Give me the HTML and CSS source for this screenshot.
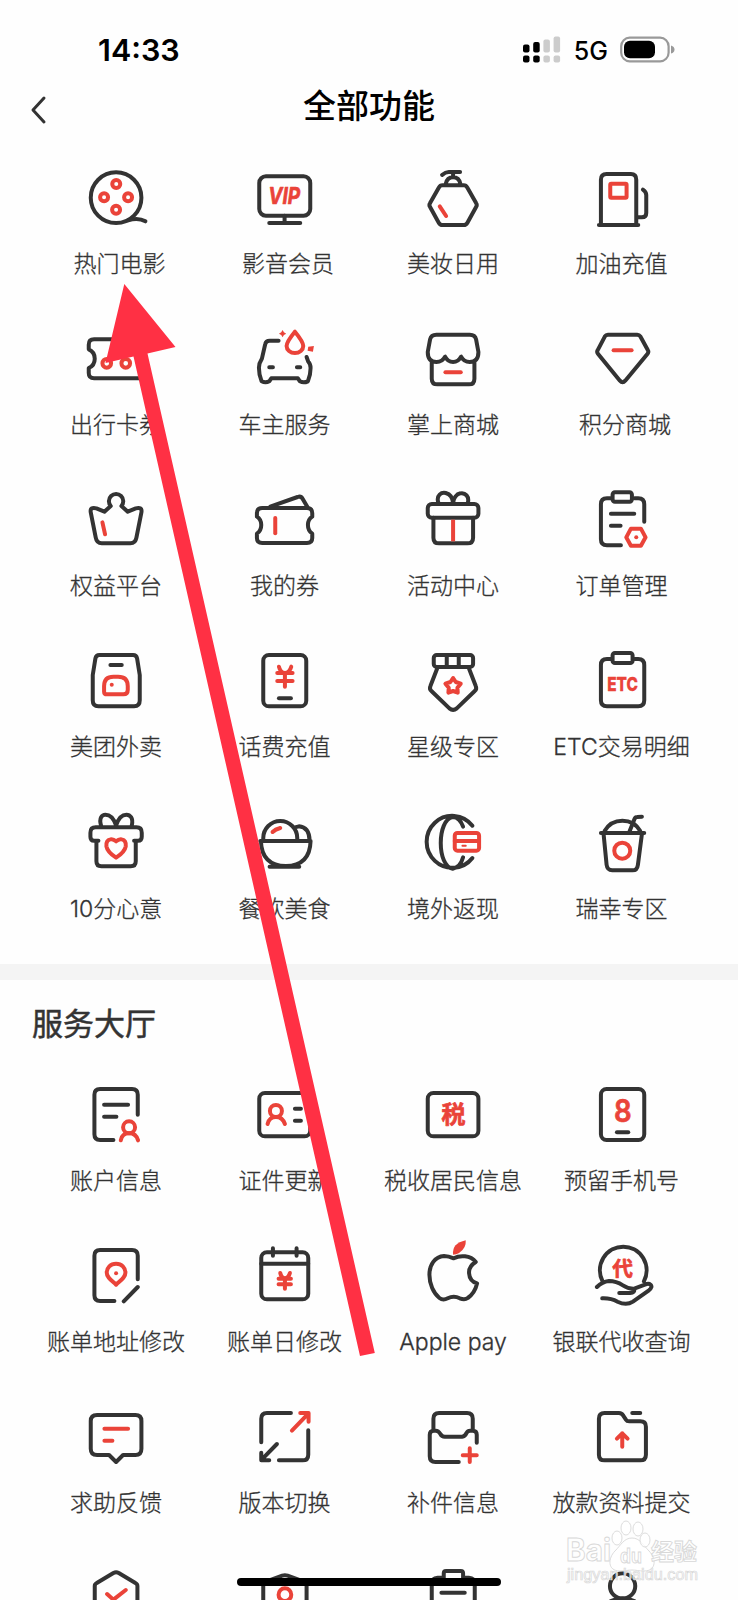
FILE: index.html
```html
<!DOCTYPE html>
<html lang="zh-CN">
<head>
<meta charset="utf-8">
<title>全部功能</title>
<link rel="stylesheet" href="styles.css">
</head>
<body>
<div class="phone">
  <div class="status">
    <div class="time">14:33</div>
    <div class="status-right">
      <svg class="signal" width="38" height="27" viewBox="0 0 38 27">
        <rect x="0" y="8.5" width="6.5" height="8" rx="2"/><rect x="10.2" y="6" width="6.5" height="10.5" rx="2"/>
        <g class="faint"><rect x="20.4" y="3.5" width="6.5" height="13" rx="2"/><rect x="30.6" y="0.5" width="6.5" height="16" rx="2"/></g>
        <rect x="0" y="19.5" width="6.5" height="7" rx="2"/><rect x="10.2" y="19.5" width="6.5" height="7" rx="2"/>
        <g class="faint"><rect x="20.4" y="19.5" width="6.5" height="7" rx="2"/><rect x="30.6" y="19.5" width="6.5" height="7" rx="2"/></g>
      </svg>
      <span class="net">5G</span>
      <svg class="battery" width="56" height="27" viewBox="0 0 56 27">
        <rect class="shell" x="1.2" y="1.7" width="47.4" height="23.6" rx="8.5"/>
        <rect x="4" y="4.8" width="31" height="17.4" rx="6"/>
        <path class="nub" d="M51 9.5q3.5 1 3.5 4t-3.5 4z"/>
      </svg>
    </div>
  </div>

  <div class="nav">
    <svg class="back" width="20" height="32" viewBox="0 0 20 32"><path d="M16 4L5 16l11 12"/></svg>
    <h1>全部功能</h1>
  </div>

  <div class="grid">
    <div class="tile shifted">
      <svg viewBox="60.75 33 216 216"><circle cx="169" cy="140" r="76"/><path d="M205 208Q235 198 257 211"/><g class="red"><circle cx="169.500" cy="99" r="12"/><circle cx="133" cy="139" r="12"/><circle cx="205" cy="139" r="12"/><circle cx="169" cy="176" r="12"/></g></svg>
      <span>热门电影</span>
    </div>
    <div class="tile shifted">
      <svg viewBox="566.25 33 216 216"><rect x="597" y="76" width="153" height="118" rx="20"/><path d="M673 194v22M627 216h93"/><text class="vip" x="624" y="160" textLength="96" lengthAdjust="spacingAndGlyphs">VIP</text></svg>
      <span>影音会员</span>
    </div>
    <div class="tile">
      <svg viewBox="81.75 33 216 216"><path d="M158 103h64q7 0 11 7l26 46q4 6 0 12l-26 47q-4 7-11 7h-64q-7 0-11-7l-26-47q-4-6 0-12l26-46q4-7 11-7zM168 99q4-20 22-20t22 20M190 78V64M157 72q10-9 20-9h34"/><path class="red" d="M150 166l19 29"/></svg>
      <span>美妆日用</span>
    </div>
    <div class="tile">
      <svg viewBox="587.25 33 216 216"><path d="M632 221V86q0-17 17-17h73q16 0 16 17v135M626 222h118M742 199h13q13 0 13-13v-54q0-9-10-16"/><rect class="red" x="660" y="98" width="49" height="42" rx="3"/></svg>
      <span>加油充值</span>
    </div>

    <div class="tile">
      <svg viewBox="60.75 517 216 216"><path d="M240 566H103q-16 0-16 16v14q18 8 18 28t-18 28v15q0 16 16 16h142"/><g class="red"><circle cx="141" cy="638" r="13"/><circle cx="198" cy="638" r="13"/></g></svg>
      <span>出行卡券</span>
    </div>
    <div class="tile">
      <svg viewBox="566.25 517 216 216"><path d="M655 570h-27q-11 0-13 10l-10 44q-9 14-9 27 0 22 8 41 12 6 23 0l6-9h80l6 9q11 6 24 0 8-19 8-40 0-12-7-19l-5-14M627 650h11M710 650h10"/><path class="red" d="M704 543c-14 17-25 31-25 43a25 21 0 0 0 50 0c0-12-11-26-25-43z"/><path class="fill" d="M667 538l4 7 7 4-7 4-4 7-4-7-7-4 7-4zM744 588l17-2-3 17-16-3z"/></svg>
      <span>车主服务</span>
    </div>
    <div class="tile">
      <svg viewBox="81.75 517 216 216"><path d="M140 552h100q16 0 19 14l7 38q0 30-26 30-18 0-26-16-8 16-24 16-16 0-24-16-8 16-26 16-26 0-26-30l7-38q3-14 19-14zM126 634v50q0 17 17 17h95q16 0 16-17v-50"/><path class="red" d="M167 665h46"/></svg>
      <span>掌上商城</span>
    </div>
    <div class="tile shifted">
      <svg viewBox="587.25 517 216 216"><path d="M653 552h88q6 0 9 5l23 42q3 5-1 10l-67 81q-8 9-16 0l-66-81q-4-5-1-10l22-42q3-5 9-5z"/><path class="red" d="M670 599h54"/></svg>
      <span>积分商城</span>
    </div>

    <div class="tile">
      <svg viewBox="60.75 41 216 216"><path d="M153 107l-19 17-24-10q-20-5-17 12l15 76q3 17 18 17h86q15 0 18-17l15-76q3-17-17-12l-24 10-19-17M153 107a21.500 21.500 0 1 1 32 0"/><path class="red" d="M128 156l8 36"/></svg>
      <span>权益平台</span>
    </div>
    <div class="tile">
      <svg viewBox="566.25 41 216 216"><path d="M606 113h134q16 0 16 16v10q-13 8-13 25t13 26v13q0 15-16 15H606q-16 0-16-15v-13q13-9 13-26t-13-25v-10q0-16 16-16zM630 109l82-29q10-4 15 5l15 26"/><path class="red" d="M645 143v46"/></svg>
      <span>我的券</span>
    </div>
    <div class="tile">
      <svg viewBox="81.75 41 216 216"><rect x="114" y="101" width="152" height="41" rx="12"/><path d="M131 142v60q0 17 17 17h85q17 0 17-17v-60M146 98c-8-24 10-33 22-30 14 4 21 16 22 30 1-14 10-27 22-29 14-3 28 10 22 29"/><path class="red flat" d="M190 148v65"/></svg>
      <span>活动中心</span>
    </div>
    <div class="tile">
      <svg viewBox="587.25 41 216 216"><rect x="667" y="66" width="58" height="28" rx="7"/><path d="M661 84h-11q-18 0-18 18v105q0 18 18 18h42M733 84h11q18 0 18 18v52M662 130h70M662 166h29"/><path class="red" d="M722 175h30l14 26-14 25h-30l-14-25z"/><circle class="fill" cx="738" cy="201" r="6"/></svg>
      <span>订单管理</span>
    </div>

    <div class="tile">
      <svg viewBox="60.75 525 216 216"><path d="M119 555h101q10 0 12 10l8 50v76q0 18-17 18H116q-17 0-17-18v-76l8-50q2-10 12-10zM152 585h34"/><path class="red" d="M133 665v-17q0-28 28-28h14q29 0 29 28v12q0 13-13 13h-49q-9 0-9-8z"/><circle class="fill" cx="156" cy="644" r="6"/></svg>
      <span>美团外卖</span>
    </div>
    <div class="tile">
      <svg viewBox="566.25 525 216 216"><rect x="609" y="555" width="129" height="154" rx="17"/><path d="M656 685h36"/><path class="red" d="M656 590q4 18 18 19 14-1 19-19M651 609h46M651 633h46M674 609v41"/></svg>
      <span>话费充值</span>
    </div>
    <div class="tile">
      <svg viewBox="81.75 525 216 216"><rect x="132" y="555" width="118" height="36" rx="9"/><path d="M171 556v34M207 556v34M142 596l-20 52q-4 9 3 15l54 52q11 9 22 0l54-52q7-6 3-15l-20-52"/><path class="red" d="M190 624l8 12 15 5-10 12 1 15-14-5-14 5 1-15-10-12 15-5z"/></svg>
      <span>星级专区</span>
    </div>
    <div class="tile">
      <svg viewBox="587.25 525 216 216"><rect x="667" y="549" width="60" height="30" rx="7"/><path d="M661 567h-11q-18 0-18 18v106q0 18 18 18h94q18 0 18-18V585q0-18-18-18h-11"/><text class="etc" x="651" y="662" textLength="92" lengthAdjust="spacingAndGlyphs">ETC</text></svg>
      <span>ETC交易明细</span>
    </div>

    <div class="tile">
      <svg viewBox="240.75 49 216 216"><path d="M296 150h-13q-11 0-11-12v-12q0-16 16-16h122q16 0 16 16v12q0 12-11 12h-12M290 152v60q0 15 15 15h88q15 0 15-15v-60M304 105c-7-24 3-33 13-33 16 0 26 14 32 32 6-18 16-32 31-32 10 0 22 9 16 33"/><path class="red" d="M349 152q-9-8-17-6-14 3-12 21 3 17 29 34 26-17 29-34 2-18-12-21-8-2-17 6z"/></svg>
      <span>10分心意</span>
    </div>
    <div class="tile">
      <svg viewBox="746.25 49 216 216"><path d="M780 151h151M782 151q2 74 75 75 72-1 74-75M808 228h89M789 147v-5a51 51 0 0 1 102 0v5M884 110l12-3q31 3 32 42"/><path class="red" d="M817 124q8-8 23-12"/></svg>
      <span>餐饮美食</span>
    </div>
    <div class="tile">
      <svg viewBox="144.75 49 216 216"><path d="M311 105A77 78 0 1 0 311 202M283 108q-10-28-31-29c-48 8-48 148 0 155q23-4 31-34"/><g class="red"><rect x="258" y="127" width="73" height="53" rx="8"/><path d="M258 151h73"/></g><path class="red thin" d="M281 165h10"/></svg>
      <span>境外返现</span>
    </div>
    <div class="tile">
      <svg viewBox="650.25 49 216 216"><path d="M695 127h130M703 130l9 92q2 17 17 17h61q14 0 16-17l12-92M706 121a62 62 0 0 1 107 0M781 122l15-38q2-5 8-5l14-1"/><circle class="red" cx="759" cy="180" r="24"/></svg>
      <span>瑞幸专区</span>
    </div>
  </div>

  <div class="divider"></div>
  <h2>服务大厅</h2>

  <div class="grid">
    <div class="tile">
      <svg viewBox="150.75 25 216 216"><path d="M324 132V72q0-17-17-17h-96q-17 0-17 17v119q0 17 17 17h40M223 102h72M223 138h37"/><g class="red"><circle cx="298" cy="170" r="18"/><path d="M273 209q4-21 25-21t27 21"/></g></svg>
      <span>账户信息</span>
    </div>
    <div class="tile">
      <svg viewBox="656.25 25 216 216"><rect x="687" y="67" width="153" height="130" rx="17"/><path d="M794 114h18M794 150h18"/><g class="red"><circle cx="737" cy="121" r="18"/><path d="M712 160q5-21 25-21t27 21"/></g></svg>
      <span>证件更新</span>
    </div>
    <div class="tile">
      <svg viewBox="141.75 25 216 216"><rect x="174" y="67" width="152" height="130" rx="17"/><text class="han" x="251" y="158" font-size="72" text-anchor="middle">税</text></svg>
      <span>税收居民信息</span>
    </div>
    <div class="tile">
      <svg viewBox="647.25 25 216 216"><rect x="692" y="55" width="130" height="153" rx="17"/><path d="M740 185h34"/><text class="eight" x="731" y="154" textLength="53" lengthAdjust="spacingAndGlyphs">8</text></svg>
      <span>预留手机号</span>
    </div>

    <div class="tile">
      <svg viewBox="150.75 509 216 216"><path d="M324 627v-71q0-17-17-17h-96q-17 0-17 17v119q0 17 17 17h43M282 693l42-43"/><path class="red" d="M259 580c17 0 28 12 28 27 0 14-14 23-28 36-14-13-28-22-28-36 0-15 11-27 28-27z"/><circle class="fill" cx="259" cy="609" r="6"/></svg>
      <span>账单地址修改</span>
    </div>
    <div class="tile">
      <svg viewBox="656.25 509 216 216"><rect x="693" y="546" width="141" height="141" rx="17"/><path d="M693 580h141M728 534v22M799 534v22"/><path class="red" d="M750 608q3 15 14 16 11-1 15-16M745 625h37M745 642h37M764 625v30"/></svg>
      <span>账单日修改</span>
    </div>
    <div class="tile">
      <svg viewBox="141.75 509 216 216"><path d="M252 564c18-10 50-10 66 11-15 9-21 20-20 34 1 15 10 26 24 30-4 18-14 34-28 44-8 6-16 4-24 1q-18-9-36 0c-8 4-17 5-25-1-18-14-30-42-30-70 0-30 16-54 44-56 10 0 20 3 29 7z"/><path class="fill" d="M250 553q-4-34 38-43 2 24-20 38-8 5-18 5z"/></svg>
      <span>Apple pay</span>
    </div>
    <div class="tile">
      <svg viewBox="647.25 509 216 216"><path d="M697 633a70 71 0 1 1 124 0M680 650q16-16 36-18 22 0 42 13 16 11 34 10M792 655q2 13-12 13h-33M696 684q26-1 46 10 26 13 46 0l48-34q12-10 5-17-6-5-17 0l-32 12"/><text class="han" x="757" y="616" font-size="62" text-anchor="middle">代</text></svg>
      <span>银联代收查询</span>
    </div>

    <div class="tile">
      <svg viewBox="150.75 33 216 216"><path d="M202 75h115q18 0 18 18v83q0 19-18 19h-37l-21 21-21-21h-36q-19 0-19-19V93q0-18 19-18z"/><path class="red" d="M224 116h71M224 152h24"/></svg>
      <span>求助反馈</span>
    </div>
    <div class="tile">
      <svg viewBox="656.25 33 216 216"><path d="M782 69h-72q-17 0-17 17v71M834 121v73q0 17-17 17h-71M740 162l-45 46M693 188v23h24"/><path class="red" d="M785 122l47-49M810 69h25v26"/></svg>
      <span>版本切换</span>
    </div>
    <div class="tile">
      <svg viewBox="141.75 33 216 216"><path d="M191 118V86q0-17 17-17h84q17 0 17 17v32M321 158v-24q0-12-12-12h-8q-7 0-10 6-5 11-14 12h-52q-9 0-13-8-6-10-14-10h-6q-12 0-12 12v65q0 17 17 17h70"/><path class="red" d="M300 175v41M279 196h42"/></svg>
      <span>补件信息</span>
    </div>
    <div class="tile">
      <svg viewBox="647.25 33 216 216"><path d="M703 69h43q9 0 13 8l8 12q3 5 10 5h33q17 0 17 16v84q0 17-17 17H703q-17 0-17-17V86q0-17 17-17zM786 69h24"/><path class="red" d="M756 130v40M740 146l16-16 16 16"/></svg>
      <span>放款资料提交</span>
    </div>

    <div class="tile">
      <svg viewBox="150.75 517 216 216"><path d="M195 670v-84q0-6 6-9l50-30q8-4 16 0l50 30q6 3 6 9v84"/><path class="red" d="M232 610l19 17 37-29"/></svg>
    </div>
    <div class="tile">
      <svg viewBox="656.25 517 216 216"><path d="M699 670v-84q0-10 10-14l47-17q8-3 16 0l47 17q10 4 10 14v84"/><circle class="red" cx="764" cy="612" r="19"/></svg>
    </div>
    <div class="tile">
      <svg viewBox="141.75 517 216 216"><path d="M229 541h44q7 0 7 7v20h-58v-20q0-7 7-7z"/><path d="M218 561h-14q-18 2-18 16v90M284 561h13q18 2 18 16v90M215 606h70"/></svg>
    </div>
    <div class="tile">
      <svg viewBox="647.25 517 216 216"><circle cx="757" cy="586" r="38"/><path d="M722 631q35-16 70 0"/></svg>
    </div>
  </div>

  <svg class="arrow" width="738" height="1600" viewBox="0 0 738 1600"><path d="M124.300 284L175.500 347l-28 6.500L374.800 1353l-14.800 3L133.500 356.500 105.500 363z"/></svg>

  <svg class="watermark" width="150" height="72" viewBox="0 0 150 72">
    <text class="bai" x="4" y="41" font-size="31" textLength="45" lengthAdjust="spacingAndGlyphs">Bai</text>
    <path d="M70 18c8 0 11 7 17 13 7 7 8 20-5 20-5 0-8-1-12-1s-7 1-12 1c-13 0-12-13-5-20 6-6 9-13 17-13z"/>
    <ellipse cx="55" cy="18" rx="5" ry="7"/><ellipse cx="64" cy="8" rx="5" ry="7"/><ellipse cx="76" cy="9" rx="5" ry="7"/><ellipse cx="83" cy="20" rx="5" ry="7"/>
    <text x="58" y="43" font-size="20" textLength="22" lengthAdjust="spacingAndGlyphs">du</text>
    <text class="cn" x="89" y="40" font-size="23">经验</text>
    <text class="url" x="5" y="60" font-size="16" textLength="131" lengthAdjust="spacingAndGlyphs">jingyan.baidu.com</text>
  </svg>
  <div class="home-bar"></div>
</div>
</body>
</html>
```
FILE: styles.css
```css
* { box-sizing: border-box; }
body {
  margin: 0;
  background: #fefefe;
  color: #333;
  font-family: "Noto Sans CJK SC", sans-serif;
}
.phone {
  position: relative;
  width: 738px;
  height: 1600px;
  overflow: hidden;
}
.status {
  display: flex;
  justify-content: space-between;
  align-items: center;
  height: 76px;
  padding: 23px 62px 0 98px;
  color: #000;
  font-family: Inter, sans-serif;
}
.time { font-size: 30.5px; font-weight: 600; }
.status-right { display: flex; align-items: center; }
.net { margin: 3px 12px 0 13px; font-size: 25px; font-weight: 500; }
.faint { fill: #ccc; }
.battery .shell { fill: none; stroke: #999; stroke-width: 2.2; }
.battery .nub { fill: #999; }

.nav {
  display: grid;
  grid-template-columns: 60px 1fr 60px;
  align-items: center;
  height: 58px;
}
.back { margin: 10px 0 0 28px; fill: none; stroke: #333; stroke-width: 3; stroke-linecap: round; stroke-linejoin: round; }
h1 {
  margin: 0;
  padding-bottom: 3px;
  color: #000;
  font-size: 33px;
  font-weight: 500;
  line-height: 48px;
  text-align: center;
}

.grid {
  display: grid;
  grid-template-columns: repeat(4, 1fr);
  row-gap: 42px;
  padding: 27.6px 32px 38px;
}
.tile {
  display: flex;
  flex-direction: column;
  align-items: center;
  gap: 13px;
  height: 119.3px;
}
.tile span {
  margin-right: .4px;
  font-family: Inter, "Noto Sans CJK SC", sans-serif;
  font-size: 23px;
  font-weight: 300;
  line-height: 34px;
  white-space: nowrap;
  -webkit-text-stroke: .3px #333;
}
.shifted span { padding-left: 7px; }
.tile svg {
  flex: none;
  width: 72px;
  height: 72px;
  overflow: visible;
  fill: none;
  stroke: #333;
  stroke-width: 12;
  stroke-linecap: round;
  stroke-linejoin: round;
}
.tile .red { stroke: #ea4339; stroke-width: 12; }
.tile .thin { stroke-width: 6; }
.tile .flat { stroke-linecap: butt; }
.tile .fill { fill: #ea4339; stroke: none; }
.tile text { fill: #ea4339; stroke: #ea4339; stroke-width: 2; }
.tile .vip { font: italic 700 70px Inter, sans-serif; }
.tile .etc { font: 800 58px Inter, sans-serif; stroke-width: 1; }
.tile .eight { font: 600 92px Inter, sans-serif; }
.tile .han { font-family: "Noto Sans CJK SC", sans-serif; font-weight: 700; }

.divider { height: 16px; background: #f4f4f4; }
h2 {
  margin: 20px 0 7px;
  padding-left: 32px;
  font-size: 31px;
  font-weight: 400;
  line-height: 44px;
  -webkit-text-stroke: .5px #333;
}

.arrow { position: absolute; left: 0; top: 0; fill: #ff3044; }
.watermark {
  position: absolute;
  left: 562px;
  top: 1520px;
  fill: rgba(255, 255, 255, .75);
  stroke: #d8d8d8;
  stroke-width: .9;
  font-family: "Liberation Sans", sans-serif;
  font-weight: 700;
}
.watermark .bai { font-family: Inter, sans-serif; }
.watermark .cn { font-family: "Noto Sans CJK SC", sans-serif; }
.watermark .url { font-weight: 400; stroke-width: .7; }
.home-bar {
  position: absolute;
  left: 237px;
  top: 1577.5px;
  width: 264px;
  height: 8px;
  border-radius: 4px;
  background: #000;
}
```
